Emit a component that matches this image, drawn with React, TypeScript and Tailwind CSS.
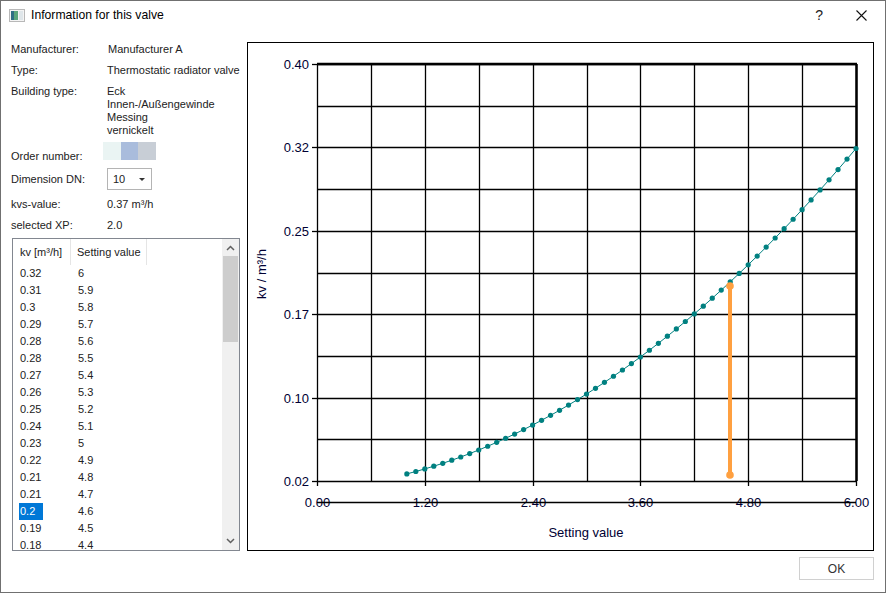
import React from 'react';

const rows: [string, string][] = [
  ['0.32', '6'],
  ['0.31', '5.9'],
  ['0.3', '5.8'],
  ['0.29', '5.7'],
  ['0.28', '5.6'],
  ['0.28', '5.5'],
  ['0.27', '5.4'],
  ['0.26', '5.3'],
  ['0.25', '5.2'],
  ['0.24', '5.1'],
  ['0.23', '5'],
  ['0.22', '4.9'],
  ['0.21', '4.8'],
  ['0.21', '4.7'],
  ['0.2', '4.6'],
  ['0.19', '4.5'],
  ['0.18', '4.4'],
];

const font = { fontFamily: '"Liberation Sans", Arial, sans-serif' };

// plot area in page coordinates
const X0 = 317;
const X1 = 856;
const Y0 = 64;
const Y1 = 481;
const sx = (s: number) => X0 + (s / 6) * (X1 - X0);
const sy = (kv: number) => Y1 - ((kv - 0.02) / 0.38) * (Y1 - Y0);
const kvAt = (s: number) => 0.013 + 0.00583 * s + 0.00764 * s * s;

function Chart() {
  const pts = Array.from({ length: 51 }, (_, i) => {
    const s = 1 + i * 0.1;
    return [sx(s), sy(kvAt(s))] as [number, number];
  });
  const yLabels = ['0.40', '0.32', '0.25', '0.17', '0.10', '0.02'];
  const xLabels = ['0.00', '1.20', '2.40', '3.60', '4.80', '6.00'];
  return (
    <svg
      className="absolute inset-0"
      width={625}
      height={507}
      viewBox="248 43 625 507"
      style={{ fontFamily: '"Liberation Sans", Arial, sans-serif' }}
    >
      {Array.from({ length: 11 }, (_, i) => {
        const x = Math.round(X0 + (i * (X1 - X0)) / 10) + 0.5;
        return <line key={'v' + i} x1={x} x2={x} y1={Y0} y2={Y1} stroke="#000" strokeWidth={1.3} />;
      })}
      {Array.from({ length: 11 }, (_, i) => {
        const y = Math.round(Y0 + (i * (Y1 - Y0)) / 10) + 0.5;
        return <line key={'h' + i} x1={X0} x2={X1} y1={y} y2={y} stroke="#000" strokeWidth={1.3} />;
      })}
      <line x1={X0} x2={X1 + 1} y1={Y0} y2={Y0} stroke="#000" strokeWidth={2.5} />
      <line x1={X1 + 0.5} x2={X1 + 0.5} y1={Y0} y2={Y1} stroke="#000" strokeWidth={2.5} />
      {yLabels.map((l, i) => {
        const y = Math.round(Y0 + (i * (Y1 - Y0)) / 5) + 0.5;
        return (
          <g key={l}>
            <line x1={312} x2={X0} y1={y} y2={y} stroke="#000" strokeWidth={1.3} />
            <text x={309} y={y + 4.5} textAnchor="end" fontSize={13} fill="#000033">
              {l}
            </text>
          </g>
        );
      })}
      {xLabels.map((l, i) => {
        const x = Math.round(X0 + (i * (X1 - X0)) / 5) + 0.5;
        return (
          <g key={l}>
            <line x1={x} x2={x} y1={Y1} y2={486} stroke="#000" strokeWidth={1.3} />
            <text x={x} y={507} textAnchor="middle" fontSize={13} fill="#000033">
              {l}
            </text>
          </g>
        );
      })}
      <line x1={X0} x2={X1} y1={502.5} y2={502.5} stroke="#000" strokeWidth={1.3} />
      <text x={586} y={537} textAnchor="middle" fontSize={13} fill="#000033">
        Setting value
      </text>
      <text
        x={0}
        y={0}
        transform="translate(266 274) rotate(-90)"
        textAnchor="middle"
        fontSize={13}
        fill="#000033"
      >
        kv / m³/h
      </text>
      <polyline points={pts.map((p) => p.join(',')).join(' ')} fill="none" stroke="#008080" strokeWidth={1} />
      {pts.map(([x, y], i) => (
        <circle key={i} cx={x} cy={y} r={2.6} fill="#008080" />
      ))}
      <line x1={730} x2={730} y1={286} y2={475} stroke="#ffa040" strokeWidth={4} />
      <circle cx={730} cy={286} r={3.8} fill="#ffa040" />
      <circle cx={730} cy={475} r={3.8} fill="#ffa040" />
    </svg>
  );
}

function Row({ label, children, h = 21 }: { label: string; children: React.ReactNode; h?: number }) {
  return (
    <div className="flex items-center whitespace-nowrap" style={{ height: h }}>
      <div className="w-[96px] shrink-0">{label}</div>
      <div>{children}</div>
    </div>
  );
}

export default function App() {
  return (
    <div
      className="w-[886px] h-[593px] border border-[#707070] bg-white flex flex-col text-[11px] text-[#000] overflow-hidden"
      style={font}
    >
      <div className="h-[29px] flex items-center shrink-0">
        <svg className="ml-[8px]" width="16" height="13" viewBox="0 0 16 13">
          <rect x="0.5" y="0.5" width="15" height="12" fill="#f4f4f4" stroke="#b8b8b8" />
          <rect x="2" y="2" width="7" height="9" fill="#2f6f84" />
          <rect x="5" y="2" width="4" height="9" fill="#5aa67c" />
          <rect x="10" y="2" width="4" height="9" fill="#dfe6ea" />
        </svg>
        <span className="ml-[6px] text-[12.2px]">Information for this valve</span>
        <span className="ml-auto mr-[33px] text-[14px] text-[#222]">?</span>
        <svg className="mr-[18px]" width="11" height="11" viewBox="0 0 11 11">
          <path d="M0.5 0.5 L10.5 10.5 M10.5 0.5 L0.5 10.5" stroke="#111" strokeWidth="1.1" />
        </svg>
      </div>
      <div className="flex h-[521px] shrink-0">
        <div className="w-[246px] shrink-0 flex flex-col pl-[10px] pt-[9px] text-[#222]">
          <Row label="Manufacturer:">
            <span className="ml-[1px]">Manufacturer A</span>
          </Row>
          <Row label="Type:">Thermostatic radiator valve</Row>
          <div className="flex h-[56px] pt-[4px] leading-[13px] whitespace-nowrap">
            <div className="w-[96px] shrink-0">Building type:</div>
            <div>
              <div>Eck</div>
              <div>Innen-/Außengewinde</div>
              <div>Messing</div>
              <div>vernickelt</div>
            </div>
          </div>
          <div className="flex h-[30px]">
            <div className="w-[92px] shrink-0 pt-[11px]">Order number:</div>
            <div className="flex mt-[5px] h-[18px]">
              <div className="w-[18px] bg-[#eaf4f3]" />
              <div className="w-[17px] bg-[#a9bcdc]" />
              <div className="w-[18px] bg-[#c8ced6]" />
            </div>
          </div>
          <Row label="Dimension DN:" h={24}>
            <div className="w-[45px] h-[22px] border border-[#b4b4b4] flex items-center pl-[5px]">
              <span>10</span>
              <svg className="ml-auto mr-[6px]" width="6" height="3" viewBox="0 0 6 3">
                <path d="M0 0 L6 0 L3 3 Z" fill="#333" />
              </svg>
            </div>
          </Row>
          <div className="mt-[3px]">
            <Row label="kvs-value:">0.37 m³/h</Row>
          </div>
          <Row label="selected XP:">2.0</Row>
          <div className="ml-[1px] mt-[2px] w-[228px] h-[313px] border border-[#828790] flex overflow-hidden">
            <div className="flex-1 flex flex-col whitespace-nowrap">
              <div className="flex h-[26px] items-center shrink-0">
                <div className="w-[58px] pl-[7px] border-r border-[#e5e5e5] h-full flex items-center">kv [m³/h]</div>
                <div className="w-[76px] pl-[6px] border-r border-[#e5e5e5] h-full flex items-center">
                  Setting value
                </div>
              </div>
              {rows.map(([kv, s], i) => (
                <div key={i} className="flex h-[17px] items-center shrink-0">
                  <div className="w-[65px] pl-[6px]">
                    <span
                      className={
                        i === 14 ? 'bg-[#0078d7] text-white inline-block w-[24px] pl-[1px] leading-[17px]' : 'pl-[1px]'
                      }
                    >
                      {kv}
                    </span>
                  </div>
                  <div>{s}</div>
                </div>
              ))}
            </div>
            <div className="w-[17px] bg-[#f0f0f0] flex flex-col items-center shrink-0">
              <svg className="mt-[6px]" width="9" height="6" viewBox="0 0 9 6">
                <path d="M1 5 L4.5 1.5 L8 5" fill="none" stroke="#606060" strokeWidth="1.5" />
              </svg>
              <div className="mt-[5px] w-[15px] h-[86px] bg-[#cdcdcd]" />
              <svg className="mt-auto mb-[6px]" width="9" height="6" viewBox="0 0 9 6">
                <path d="M1 1 L4.5 4.5 L8 1" fill="none" stroke="#606060" strokeWidth="1.5" />
              </svg>
            </div>
          </div>
        </div>
        <div className="mt-[12px] w-[627px] h-[509px] border border-black relative shrink-0">
          <Chart />
        </div>
      </div>
      <div className="flex-1 flex justify-end pr-[11px] pt-[6px]">
        <div className="w-[75px] h-[23px] border border-[#d0d0d0] flex items-center justify-center text-[#333] text-[12px]">
          OK
        </div>
      </div>
    </div>
  );
}
